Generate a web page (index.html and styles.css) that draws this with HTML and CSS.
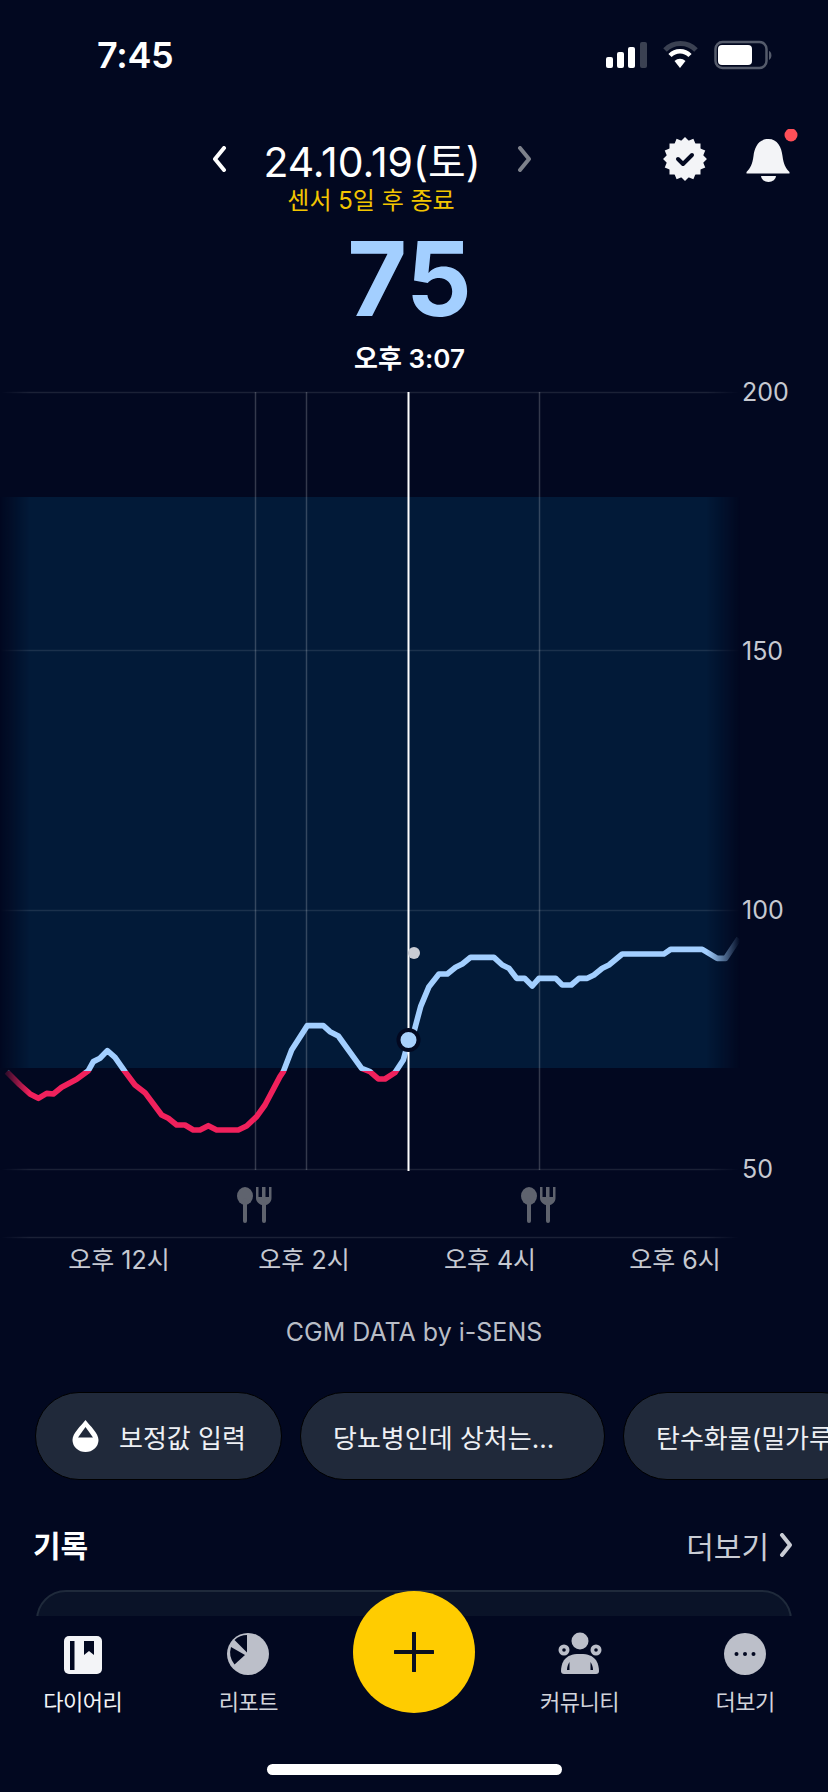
FILE: index.html
```html
<!DOCTYPE html>
<html lang="ko">
<head>
    <meta charset="UTF-8">
    <meta name="viewport" content="width=device-width, initial-scale=1.0">
    <link rel="stylesheet" href="styles.css">
    <title>CGM</title>
</head>
<body>
    <div class="phone">
        <div class="status-bar">
            <div class="clock">7:45</div>
            <svg class="status-icons" width="170" height="30" viewBox="603 40 170 30">
                <rect x="606" y="57" width="7" height="11" rx="2" fill="#fff"/>
                <rect x="617" y="52" width="7" height="16" rx="2" fill="#fff"/>
                <rect x="628" y="47" width="7" height="21" rx="2" fill="#fff"/>
                <rect x="640" y="42" width="7" height="26" rx="2" fill="#3b4152"/>
                <path d="M665 50 a22 22 0 0 1 31 0" fill="none" stroke="#3b4152" stroke-width="5"/>
                <path d="M670 55.500 a14 14 0 0 1 20 0" fill="none" stroke="#fff" stroke-width="4.500"/>
                <path d="M674.500 61 l5.500 7 l5.500 -7 a8 8 0 0 0 -11 0 z" fill="#fff"/>
                <rect x="715.500" y="42" width="51" height="26" rx="7" fill="none" stroke="#555b6b" stroke-width="2.500"/>
                <rect x="718" y="45" width="34" height="20" rx="4" fill="#fff"/>
                <path d="M769 51 c3 1 3.500 7 0 9 z" fill="#555b6b"/>
            </svg>
        </div>

        <div class="top-row">
            <svg class="chevron" width="16" height="26" viewBox="0 0 16 26"><path d="M13 2 L4 13 L13 24" fill="none" stroke="#fff" stroke-width="4" stroke-linecap="round" stroke-linejoin="round"/></svg>
            <div class="date">24.10.19(토)</div>
            <svg class="chevron" width="16" height="26" viewBox="0 0 16 26"><path d="M3 2 L12 13 L3 24" fill="none" stroke="#7d818b" stroke-width="4" stroke-linecap="round" stroke-linejoin="round"/></svg>
            <div class="top-actions">
                <svg width="44" height="44" viewBox="-22 -22 44 44">
                    <g fill="#f3f4f7">
                        <rect x="-15.500" y="-15.500" width="31" height="31"/>
                        <rect x="-15.500" y="-15.500" width="31" height="31" transform="rotate(22.500)"/>
                        <rect x="-15.500" y="-15.500" width="31" height="31" transform="rotate(45)"/>
                        <rect x="-15.500" y="-15.500" width="31" height="31" transform="rotate(67.500)"/>
                    </g>
                    <path d="M-7 0 L-2 5 L7 -4" fill="none" stroke="#020820" stroke-width="4" stroke-linecap="round" stroke-linejoin="round"/>
                </svg>
                <svg width="56" height="60" viewBox="742 128 56 60">
                    <path d="M768.500 138 c-10 0 -14 8 -15 17 c-1 8 -3 12 -7 16 v1.500 h43 v-1.500 c-4 -4 -6 -8 -7 -16 c-1 -9 -5 -17 -14 -17 z" fill="#f3f4f7"/>
                    <path d="M761 175 h15 a7.500 6 0 0 1 -15 0 z" fill="#f3f4f7"/>
                    <circle cx="791" cy="134" r="6.500" fill="#ff4f58"/>
                </svg>
            </div>
        </div>

        <div class="sensor">센서 5일 후 종료</div>
        <div class="glucose">75</div>
        <div class="glucose-time">오후 3:07</div>

        <svg class="chart" width="828" height="915" viewBox="0 370 828 915">
            <defs>
                <linearGradient id="edgeFade" gradientUnits="userSpaceOnUse" x1="0" y1="0" x2="740" y2="0">
                    <stop offset="0" stop-color="#000"/>
                    <stop offset="0.04" stop-color="#fff"/>
                    <stop offset="0.955" stop-color="#fff"/>
                    <stop offset="1" stop-color="#000"/>
                </linearGradient>
                <mask id="edgeMask" maskUnits="userSpaceOnUse" x="0" y="370" width="828" height="915">
                    <rect x="0" y="370" width="828" height="915" fill="url(#edgeFade)"/>
                </mask>
                <clipPath id="lowClip"><rect x="0" y="1071" width="828" height="120"/></clipPath>
                <clipPath id="okClip"><rect x="0" y="370" width="828" height="701"/></clipPath>
                <polyline id="curve" transform="translate(0 900) scale(0.3333)" fill="none" stroke-width="17" stroke-linejoin="round" points="20,515 60,555 90,582 115,595 140,580 160,582 185,562 230,538 265,512 280,485 300,475 322,452 345,472 375,515 405,555 435,578 485,645 505,655 530,675 555,675 580,690 600,690 625,677 650,690 715,690 740,678 770,650 795,615 840,530 850,515 875,450 922,377 970,377 990,395 1015,408 1085,505 1110,515 1135,537 1155,537 1185,518 1210,480 1226,422 1242,395 1262,320 1287,260 1317,222 1342,222 1367,202 1387,192 1412,172 1482,172 1507,195 1527,205 1550,235 1574,235 1597,258 1617,235 1667,235 1687,255 1714,255 1737,235 1762,235 1782,225 1807,205 1827,195 1867,162 1992,162 2012,148 2107,148 2152,175 2177,175 2217,115"/>
                <g id="meal" fill="#5f636e">
                    <ellipse cx="245" cy="1196" rx="8" ry="9"/>
                    <rect x="243" y="1198" width="4" height="25" rx="2"/>
                    <path d="M256 1187 h2.500 v10 h3.500 v-10 h3.500 v10 h3.500 v-10 h2.500 v11 c0 4 -3 6.500 -5.500 7 v16 a2 2 0 0 1 -4 0 v-16 c-2.500 -0.500 -6 -3 -6 -7 z"/>
                </g>
            </defs>

            <g mask="url(#edgeMask)">
                <rect class="band" x="0" y="497" width="740" height="571"/>
                <line class="grid" x1="0" y1="392.500" x2="740" y2="392.500"/>
                <line class="grid" x1="0" y1="650.500" x2="740" y2="650.500"/>
                <line class="grid" x1="0" y1="910.500" x2="740" y2="910.500"/>
                <line class="grid" x1="0" y1="1169.500" x2="740" y2="1169.500"/>
                <line class="grid" x1="0" y1="1237.500" x2="740" y2="1237.500"/>
            </g>

            <line class="vline" x1="255.500" y1="392" x2="255.500" y2="1170"/>
            <line class="vline" x1="306.500" y1="392" x2="306.500" y2="1170"/>
            <line class="vline" x1="539.500" y1="392" x2="539.500" y2="1170"/>

            <g mask="url(#edgeMask)">
                <use href="#curve" stroke="#f0215c" clip-path="url(#lowClip)"/>
                <use href="#curve" stroke="#a3cfff" clip-path="url(#okClip)"/>
            </g>

            <line x1="408.500" y1="392" x2="408.500" y2="1171" stroke="#fff" stroke-width="2"/>
            <circle cx="414" cy="953" r="6" fill="#c9ccd4"/>
            <circle cx="408.500" cy="1040" r="10" fill="#a9d0fb" stroke="#020820" stroke-width="4"/>

            <use href="#meal"/>
            <use href="#meal" x="284"/>

            <text class="tick" x="742" y="401">200</text>
            <text class="tick" x="742" y="660">150</text>
            <text class="tick" x="742" y="919">100</text>
            <text class="tick" x="742" y="1178">50</text>

            <text class="hour" x="119" y="1269">오후 12시</text>
            <text class="hour" x="304" y="1269">오후 2시</text>
            <text class="hour" x="490" y="1269">오후 4시</text>
            <text class="hour" x="675" y="1269">오후 6시</text>
        </svg>

        <div class="data-source">CGM DATA by i-SENS</div>

        <div class="chips">
            <div class="chip chip-first">
                <svg width="27" height="32" viewBox="0 0 27 32">
                    <path d="M13.500 0 C9 6 0.500 13 0.500 20 a13 12 0 0 0 26 0 C26.500 13 18 6 13.500 0 z" fill="#fff"/>
                    <path d="M13.500 7 L6 17.500 H21 z" fill="#20293a"/>
                </svg>
                <span>보정값 입력</span>
            </div>
            <div class="chip chip-second">당뇨병인데 상처는...</div>
            <div class="chip">탄수화물(밀가루</div>
        </div>

        <div class="section-head">
            <div class="section-title">기록</div>
            <div class="section-more">
                더보기
                <svg width="14" height="24" viewBox="0 0 14 24"><path d="M3 2 L11 12 L3 22" fill="none" stroke="#c9ccd4" stroke-width="4" stroke-linecap="round" stroke-linejoin="round"/></svg>
            </div>
        </div>

        <div class="record-card"></div>

        <nav class="tab-bar">
            <div class="tab tab-active">
                <svg width="44" height="44" viewBox="0 0 44 44">
                    <rect x="3" y="4" width="38" height="38" rx="5" fill="#f3f4f7"/>
                    <rect x="9" y="9" width="4.500" height="29" fill="#020820"/>
                    <path d="M23 9 H33 V23 L28 19 L23 23 z" fill="#020820"/>
                </svg>
                <span>다이어리</span>
            </div>
            <div class="tab">
                <svg width="44" height="44" viewBox="-22 -22 44 44">
                    <circle r="21" fill="#bcbfc9"/>
                    <path d="M-1 -1.500 V-19 A19 19 0 0 0 -13.500 -14 z" fill="#020820"/>
                    <path d="M-3 1 L-17 -7 A19 19 0 0 0 -13.500 10.500 z" fill="#020820"/>
                </svg>
                <span>리포트</span>
            </div>
            <div class="tab"></div>
            <div class="tab">
                <svg width="44" height="44" viewBox="0 0 44 44">
                    <g fill="#bcbfc9">
                        <circle cx="22" cy="9" r="8.500"/>
                        <circle cx="6" cy="18" r="5.500"/>
                        <circle cx="38" cy="18" r="5.500"/>
                        <path d="M3 39 c0 -3 1 -9 4 -12 c3 -3 6 -5 15 -5 c9 0 12 2 15 5 c3 3 4 9 4 12 a3 3 0 0 1 -3 3 h-32 a3 3 0 0 1 -3 -3 z"/>
                    </g>
                    <g fill="#020820">
                        <circle cx="6" cy="18" r="1.800"/>
                        <circle cx="38" cy="18" r="1.800"/>
                        <path d="M9 38 c0 -3 1 -6 2.500 -8 v8 z"/>
                        <path d="M35 38 c0 -3 -1 -6 -2.500 -8 v8 z"/>
                    </g>
                </svg>
                <span>커뮤니티</span>
            </div>
            <div class="tab">
                <svg width="44" height="44" viewBox="-22 -22 44 44">
                    <circle r="21" fill="#bcbfc9"/>
                    <circle cx="-8.500" r="2" fill="#020820"/>
                    <circle r="2" fill="#020820"/>
                    <circle cx="8.500" r="2" fill="#020820"/>
                </svg>
                <span>더보기</span>
            </div>
        </nav>

        <div class="add-button">
            <svg width="40" height="40" viewBox="0 0 40 40"><path d="M20 1 V39 M1 20 H39" fill="none" stroke="#0b1020" stroke-width="4" stroke-linecap="round"/></svg>
        </div>

        <div class="home-bar"></div>
    </div>
</body>
</html>
```

FILE: styles.css
```css
* {
    box-sizing: border-box;
}

body {
    margin: 0;
    background: #020820;
    font-family: Inter, "Noto Sans CJK KR", sans-serif;
    color: #fff;
}

.phone {
    position: relative;
    width: 828px;
    height: 1792px;
    overflow: hidden;
    background: #020820;
}

.status-bar {
    display: flex;
    align-items: center;
    justify-content: space-between;
    height: 110px;
    padding: 0 55px 0 97px;
}

.clock {
    font-size: 36px;
    font-weight: 600;
    letter-spacing: -0.3px;
}

.status-icons {
    display: block;
}

.top-row {
    display: flex;
    align-items: center;
    height: 60px;
    margin-top: 19px;
    padding-left: 211px;
}

.chevron {
    display: block;
    flex: none;
}

.date {
    width: 290px;
    font-size: 41px;
    text-align: center;
}

.top-actions {
    display: flex;
    align-items: center;
    gap: 35px;
    margin-left: auto;
    padding-right: 30px;
}

.top-actions svg {
    display: block;
}

.sensor {
    width: 742px;
    margin-top: -7px;
    font-size: 24px;
    line-height: 38px;
    color: #f2c500;
    text-align: center;
}

.glucose {
    margin-top: 2px;
    padding-right: 9px;
    font-size: 103px;
    font-weight: 700;
    line-height: 114px;
    color: #a3cfff;
    text-align: center;
}

.glucose-time {
    margin-top: 6px;
    padding-right: 9px;
    font-size: 26px;
    font-weight: 600;
    line-height: 34px;
    text-align: center;
}

.chart {
    display: block;
    margin-top: -6px;
}

.band {
    fill: #021a38;
}

.grid {
    stroke: rgba(255, 255, 255, 0.1);
    stroke-width: 1.500;
}

.vline {
    stroke: rgba(255, 255, 255, 0.2);
    stroke-width: 1.500;
}

.tick {
    font-size: 25px;
    fill: #c6c9d1;
}

.hour {
    font-size: 25px;
    fill: #c6c9d1;
    text-anchor: middle;
}

.data-source {
    margin-top: 30px;
    font-size: 25px;
    line-height: 34px;
    color: #b9bdc6;
    text-align: center;
}

.chips {
    display: flex;
    gap: 18px;
    margin-top: 43px;
    padding-left: 35px;
}

.chip {
    display: flex;
    flex: none;
    align-items: center;
    gap: 20px;
    height: 88px;
    padding: 0 32px;
    border: 1.500px solid #000;
    border-radius: 44px;
    background: #20293a;
    font-size: 26px;
    color: #eef0f4;
    white-space: nowrap;
}

.chip-first {
    width: 247px;
    padding-left: 36px;
}

.chip-second {
    width: 305px;
}

.section-head {
    display: flex;
    align-items: center;
    justify-content: space-between;
    height: 46px;
    margin-top: 42px;
    padding: 0 35px 0 33px;
}

.section-title {
    position: relative;
    top: -1px;
    font-size: 30px;
    font-weight: 700;
}

.section-more {
    display: flex;
    align-items: center;
    gap: 10px;
    font-size: 30px;
    color: #c9ccd4;
}

.record-card {
    height: 300px;
    margin: 22px 36px 0;
    border: 2px solid #1f2a3b;
    border-radius: 30px;
    background: #0a1328;
}

.tab-bar {
    position: absolute;
    left: 0;
    right: 0;
    bottom: 0;
    display: grid;
    grid-template-columns: repeat(5, 1fr);
    height: 176px;
    padding-top: 16px;
    background: #020820;
}

.tab {
    display: flex;
    flex-direction: column;
    align-items: center;
    gap: 8px;
    font-size: 22px;
    letter-spacing: -0.5px;
    color: #d2d4db;
}

.tab svg {
    display: block;
}

.tab-active {
    color: #f3f4f7;
}

.add-button {
    position: absolute;
    left: 353px;
    top: 1591px;
    display: flex;
    align-items: center;
    justify-content: center;
    width: 122px;
    height: 122px;
    border-radius: 50%;
    background: #ffcc00;
}

.home-bar {
    position: absolute;
    left: 267px;
    top: 1764px;
    width: 295px;
    height: 11px;
    border-radius: 6px;
    background: #fff;
}
```
